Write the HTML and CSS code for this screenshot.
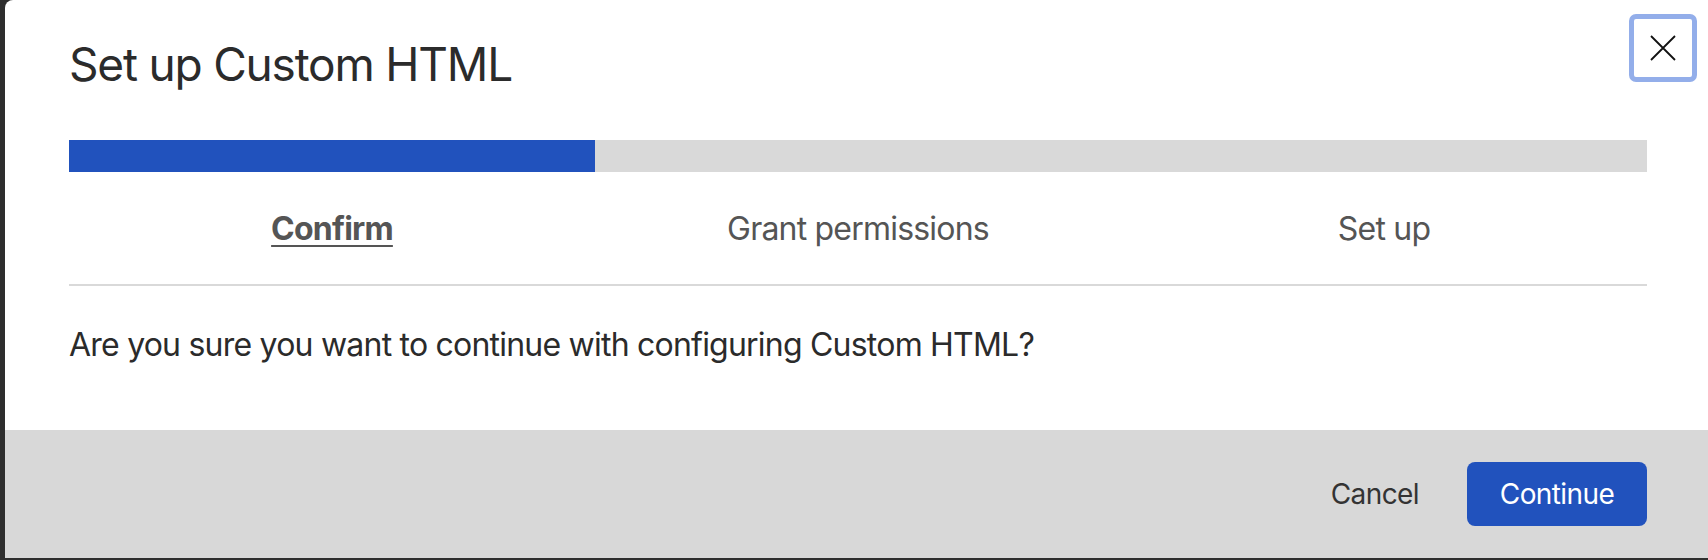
FILE: index.html
```html
<!DOCTYPE html>
<html lang="en">
<head>
<meta charset="utf-8">
<title>Set up Custom HTML</title>
<link rel="stylesheet" href="styles.css">
</head>
<body>
<div class="modal">
  <div class="header">
    <h1 class="title">Set up Custom HTML</h1>
    <button class="close" aria-label="Close">
      <svg width="26" height="26" viewBox="0 0 26 26"><path d="M1 1 L25 25 M25 1 L1 25" stroke="#111" stroke-width="1.8" fill="none"/></svg>
    </button>
  </div>
  <div class="content">
    <div class="progress"><div class="progress-fill" style="width:33.333%"></div></div>
    <div class="tabs">
      <div class="tab"><span class="tab-label active">Confirm</span></div>
      <div class="tab"><span class="tab-label">Grant permissions</span></div>
      <div class="tab"><span class="tab-label">Set up</span></div>
    </div>
    <p class="message">Are you sure you want to continue with configuring Custom HTML?</p>
  </div>
  <div class="footer">
    <button class="btn btn-cancel">Cancel</button>
    <button class="btn btn-primary">Continue</button>
  </div>
</div>
</body>
</html>
```

FILE: styles.css
```css
* { box-sizing: border-box; }
html, body { margin: 0; padding: 0; }
body {
  background: #2e2e2e;
  width: 1708px;
  height: 560px;
  overflow: hidden;
  font-family: Inter, "Noto Sans", sans-serif;
}
.modal {
  margin-left: 5px;
  width: 1703px;
  height: 558px;
  background: #fff;
  border-top-left-radius: 8px;
  display: flex;
  flex-direction: column;
  overflow: hidden;
}
.header {
  display: flex;
  justify-content: space-between;
  align-items: flex-start;
  padding: 14px 11px 0 64px;
}
.title {
  margin: 22px 0 0 0;
  font-size: 46px;
  line-height: 56px;
  font-weight: 400;
  color: #2b2b2b;
  letter-spacing: -1.2px;
}
.close {
  width: 68px;
  height: 68px;
  border: 5px solid #93aeea;
  border-radius: 7px;
  background: #fff;
  display: flex;
  align-items: center;
  justify-content: center;
  padding: 0;
}
.content {
  padding: 0 61px 0 64px;
  flex: 1;
}
.progress {
  margin-top: 48px;
  height: 32px;
  background: #d9d9d9;
}
.progress-fill {
  height: 100%;
  background: #2152bd;
}
.tabs {
  display: grid;
  grid-template-columns: 1fr 1fr 1fr;
  height: 114px;
  border-bottom: 2px solid #d9d9d9;
  padding-top: 37px;
}
.tab {
  text-align: center;
  font-size: 32px;
  line-height: 40px;
  color: #555;
  letter-spacing: -0.8px;
}
.tab-label.active {
  font-weight: 700;
  text-decoration: underline;
  text-decoration-thickness: 2px;
  text-underline-offset: 5px;
}
.message {
  margin: 39px 0 0 0;
  font-size: 32px;
  line-height: 40px;
  color: #2b2b2b;
  letter-spacing: -0.78px;
}
.footer {
  height: 128px;
  background: #d8d8d8;
  display: flex;
  justify-content: flex-end;
  align-items: center;
  gap: 16px;
  padding-right: 61px;
}
.btn {
  font-family: Inter, "Noto Sans", sans-serif;
  font-size: 28px;
  letter-spacing: -0.6px;
  height: 64px;
  border: none;
  border-radius: 8px;
  padding: 0 32px;
  cursor: pointer;
}
.btn-cancel {
  background: transparent;
  color: #333;
}
.btn-primary {
  width: 180px;
  background: #2152bd;
  color: #fff;
}
```
